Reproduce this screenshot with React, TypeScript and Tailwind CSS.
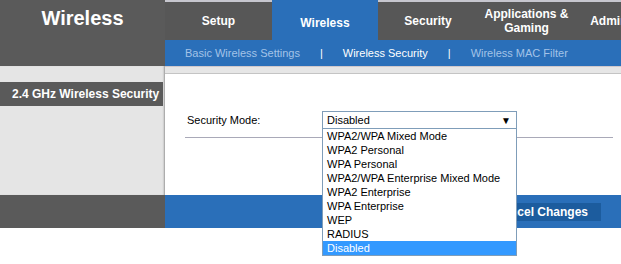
const tabs = [
  { label: 'Setup', w: 'w-[107px]', active: false },
  { label: 'Wireless', w: 'w-[106px]', active: true },
  { label: 'Security', w: 'w-[100px]', active: false },
  { label: 'Applications &\nGaming', w: 'w-[97px]', active: false },
  { label: 'Administration', w: 'w-[115px]', active: false },
];

const modes = [
  'WPA2/WPA Mixed Mode',
  'WPA2 Personal',
  'WPA Personal',
  'WPA2/WPA Enterprise Mixed Mode',
  'WPA2 Enterprise',
  'WPA Enterprise',
  'WEP',
  'RADIUS',
  'Disabled',
];

export default function App() {
  return (
    <div className="w-[621px] h-[264px] overflow-hidden bg-white font-['Liberation_Sans',Arial,sans-serif]">
      {/* header */}
      <div className="flex h-[66px]">
        <div className="w-[165px] shrink-0 bg-[#5a5a5a] pt-[3px] text-center text-[20px] font-bold text-white">
          Wireless
        </div>
        <div className="flex min-w-0 flex-1 flex-col">
          <div className="flex h-10 bg-[#5a5a5a] overflow-hidden">
            {tabs.map((t) => (
              <div
                key={t.label}
                className={
                  t.active
                    ? `${t.w} shrink-0 flex items-center justify-center pt-[5px] bg-[#2a6fb9] text-[12px] font-bold text-white`
                    : `${t.w} shrink-0 flex items-center justify-center border-t-2 border-[#c6c6ce] bg-[#575757] text-center text-[12px] font-bold leading-[14px] text-white whitespace-pre-line`
                }
              >
                {t.label}
              </div>
            ))}
          </div>
          <div className="flex h-[26px] items-center bg-[#2a6fb9] pl-5 text-[11px] text-white whitespace-nowrap">
            <span className="text-[#a3c3e8]">Basic Wireless Settings</span>
            <span className="mx-5">|</span>
            <span>Wireless Security</span>
            <span className="mx-5">|</span>
            <span className="text-[#a3c3e8]">Wireless MAC Filter</span>
          </div>
        </div>
      </div>

      {/* body */}
      <div className="flex h-[129px]">
        <div className="w-[165px] shrink-0 bg-[#e5e5e5] pt-4 shadow-[inset_-2px_0_2px_-1px_#9a9a9a]">
          <div className="flex h-6 w-[163px] items-center bg-[#5a5a5a] pl-3 text-[12px] font-bold text-white">
            2.4 GHz Wireless Security
          </div>
        </div>
        <div className="flex min-w-0 flex-1 flex-col">
          <div className="h-2 border-y border-t-[#cfc8cc] border-b-[#c4c4c4] bg-[#e6e6e6]" />
          <div className="flex-1 bg-white pt-[37px]">
            <div className="flex items-center pl-[22px] text-[11px] text-black">
              <span className="w-[135px]">Security Mode:</span>
              <div className="relative z-10">
                <div className="flex h-[18px] w-[195px] items-center justify-between border border-[#7f9db9] bg-white pl-1 pr-[5px]">
                  <span>Disabled</span>
                  <span className="text-[10px]">▼</span>
                </div>
                <div className="absolute left-0 top-[18px] w-[195px] border border-t-0 border-[#7f9db9] bg-white">
                  {modes.map((m) => (
                    <div
                      key={m}
                      className={
                        m === 'Disabled'
                          ? 'flex h-[14px] items-center bg-[#3399ff] pl-1 text-white'
                          : 'flex h-[14px] items-center pl-1'
                      }
                    >
                      {m}
                    </div>
                  ))}
                </div>
              </div>
            </div>
            <div className="ml-5 mr-2 mt-2 h-px bg-[#a9a9b8]" />
          </div>
        </div>
      </div>

      {/* footer bar */}
      <div className="flex h-[33px]">
        <div className="w-[165px] shrink-0 bg-[#5a5a5a]" />
        <div className="flex flex-1 items-center justify-end bg-[#2a6fb9] pr-5">
          <div className="flex h-[18px] items-center bg-[#1c5c9e] px-[13px] text-[12px] font-bold text-white">
            Cancel Changes
          </div>
        </div>
      </div>
    </div>
  );
}
